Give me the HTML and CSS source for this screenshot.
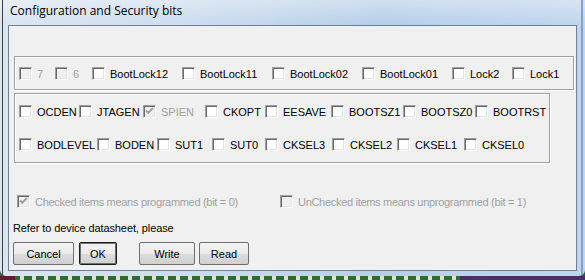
FILE: index.html
```html
<!DOCTYPE html>
<html>
  <head>
    <title>Configuration and Security bits</title>
    <link rel="stylesheet" href="styles.css">
  </head>
  <body>
    <div class="window">
      <div class="titlebar">Configuration and Security bits</div>

      <div class="client">
        <!-- lock bits -->
        <div class="group lockbits">
          <div class="bits row-lock">
            <label class="item off"><span class="cb"></span>7</label>
            <label class="item off"><span class="cb"></span>6</label>
            <label class="item"><span class="cb"></span>BootLock12</label>
            <label class="item"><span class="cb"></span>BootLock11</label>
            <label class="item"><span class="cb"></span>BootLock02</label>
            <label class="item"><span class="cb"></span>BootLock01</label>
            <label class="item"><span class="cb"></span>Lock2</label>
            <label class="item"><span class="cb"></span>Lock1</label>
          </div>
        </div>

        <!-- fuse bits -->
        <div class="group fusebits">
          <div class="bits row-high">
            <label class="item"><span class="cb"></span>OCDEN</label>
            <label class="item"><span class="cb"></span>JTAGEN</label>
            <label class="item off"><span class="cb checked"><svg width="11" height="11" viewBox="0 0 11 11"><path d="M2 4.5 L4.2 6.8 L9 2" fill="none" stroke="#a0a0a0" stroke-width="2"/></svg></span>SPIEN</label>
            <label class="item"><span class="cb"></span>CKOPT</label>
            <label class="item"><span class="cb"></span>EESAVE</label>
            <label class="item"><span class="cb"></span>BOOTSZ1</label>
            <label class="item"><span class="cb"></span>BOOTSZ0</label>
            <label class="item"><span class="cb"></span>BOOTRST</label>
          </div>
          <div class="bits row-low">
            <label class="item"><span class="cb"></span>BODLEVEL</label>
            <label class="item"><span class="cb"></span>BODEN</label>
            <label class="item"><span class="cb"></span>SUT1</label>
            <label class="item"><span class="cb"></span>SUT0</label>
            <label class="item"><span class="cb"></span>CKSEL3</label>
            <label class="item"><span class="cb"></span>CKSEL2</label>
            <label class="item"><span class="cb"></span>CKSEL1</label>
            <label class="item"><span class="cb"></span>CKSEL0</label>
          </div>
        </div>

        <div class="legend">
          <label class="item off"><span class="cb checked"><svg width="11" height="11" viewBox="0 0 11 11"><path d="M2 4.5 L4.2 6.8 L9 2" fill="none" stroke="#a0a0a0" stroke-width="2"/></svg></span>Checked items means programmed (bit = 0)</label>
          <label class="item off"><span class="cb"></span>UnChecked items means unprogrammed (bit = 1)</label>
        </div>

        <p class="hint">Refer to device datasheet, please</p>

        <div class="buttons">
          <button class="btn cancel">Cancel</button>
          <button class="btn ok">OK</button>
          <button class="btn write">Write</button>
          <button class="btn read">Read</button>
        </div>
      </div>
    </div>
    <div class="desktop"></div>
  </body>
</html>
```

FILE: styles.css
```css
body {
  margin: 0;
  width: 585px;
  height: 280px;
  overflow: hidden;
  font-family: "Liberation Sans", Arial, sans-serif;
  font-size: 11px;
  background: #2f5a34;
}

.window {
  width: 585px;
  height: 276px;
  box-sizing: border-box;
  padding: 0 8px 5px 8px;
  border-radius: 0 0 6px 6px;
  background:
    linear-gradient(90deg, transparent 2px, #3c3c3c 2px, #3c3c3c 3px, transparent 3px),
    linear-gradient(90deg, transparent 581px, #7fa3cc 581px, #7fa3cc 583px, transparent 583px),
    linear-gradient(180deg, rgba(255, 255, 255, 0.35) 0, rgba(255, 255, 255, 0) 24px),
    linear-gradient(90deg, #dbe5f0 0%, #cadbed 35%, #b6cfe9 65%, #c0d6ee 100%);
}

.titlebar {
  height: 25px;
  box-sizing: border-box;
  padding: 2px 0 0 2px;
  line-height: 17px;
  font-family: "Open Sans", "Liberation Sans", sans-serif;
  font-size: 12px;
  color: #000;
}

.client {
  height: 246px;
  box-sizing: border-box;
  border: 1px solid #6f8196;
  background: #f0f0f0;
  padding: 30px 0 0 0;
}

.group {
  box-sizing: border-box;
  margin-left: 5px;
  border: 1px solid #a0a0a0;
  box-shadow: inset 1px 1px 0 #fff, 1px 1px 0 #fff;
}

.lockbits {
  width: 560px;
  height: 34px;
  padding: 8px 0 0 4px;
}

.fusebits {
  width: 536px;
  height: 70px;
  margin-top: 3px;
  padding: 9px 0 0 4px;
}

.bits {
  display: grid;
  height: 17px;
}

.row-lock {
  grid-template-columns: 36px 37px 90px 90px 90px 90px 60px auto;
}

.row-high {
  grid-template-columns: 60px 64px 62px 60px 66px 72px 72px auto;
}

.row-low {
  margin-top: 16px;
  grid-template-columns: 78px 60px 55px 53px 67px 65px 67px auto;
}

.item {
  display: flex;
  align-items: center;
  gap: 5px;
  height: 17px;
  white-space: nowrap;
  color: #000;
}

.item.off {
  color: #a0a0a0;
}

.cb {
  display: flex;
  align-items: center;
  justify-content: center;
  width: 13px;
  height: 13px;
  flex: none;
  box-sizing: border-box;
  border: 1px solid;
  border-color: #a0a0a0 #fff #fff #a0a0a0;
  box-shadow: inset 1px 1px 0 #696969, inset -1px -1px 0 #e3e3e3;
  background: #fff;
}

.item.off .cb {
  background: #f0f0f0;
}

.legend {
  display: grid;
  grid-template-columns: 263px auto;
  margin-top: 30px;
  padding-left: 8px;
  letter-spacing: -0.3px;
}

.hint {
  margin: 12px 0 0 4px;
  line-height: 13px;
  letter-spacing: -0.1px;
}

.buttons {
  display: flex;
  margin: 7px 0 0 4px;
}

.btn {
  height: 23px;
  box-sizing: border-box;
  border: 1px solid #707070;
  border-radius: 2px;
  background: linear-gradient(180deg, #f2f2f2 0%, #ebebeb 50%, #dddddd 51%, #cfcfcf 100%);
  font-family: "Liberation Sans", Arial, sans-serif;
  font-size: 11px;
  color: #000;
  padding: 0;
}

.cancel {
  width: 61px;
}

.ok {
  width: 38px;
  margin-left: 5px;
  border-color: #1e1e1e;
  box-shadow: inset 0 0 0 1px #707070;
}

.write {
  width: 56px;
  margin-left: 22px;
}

.read {
  width: 50px;
  margin-left: 4px;
}

.desktop {
  height: 4px;
  background:
    linear-gradient(90deg, #5b1e2f 15px, transparent 15px, transparent 80px, transparent 460px, #4b2d68 460px),
    repeating-linear-gradient(90deg, #2e6b34 0, #2e6b34 8px, #d9e4d4 8px, #d9e4d4 12px);
}
```
